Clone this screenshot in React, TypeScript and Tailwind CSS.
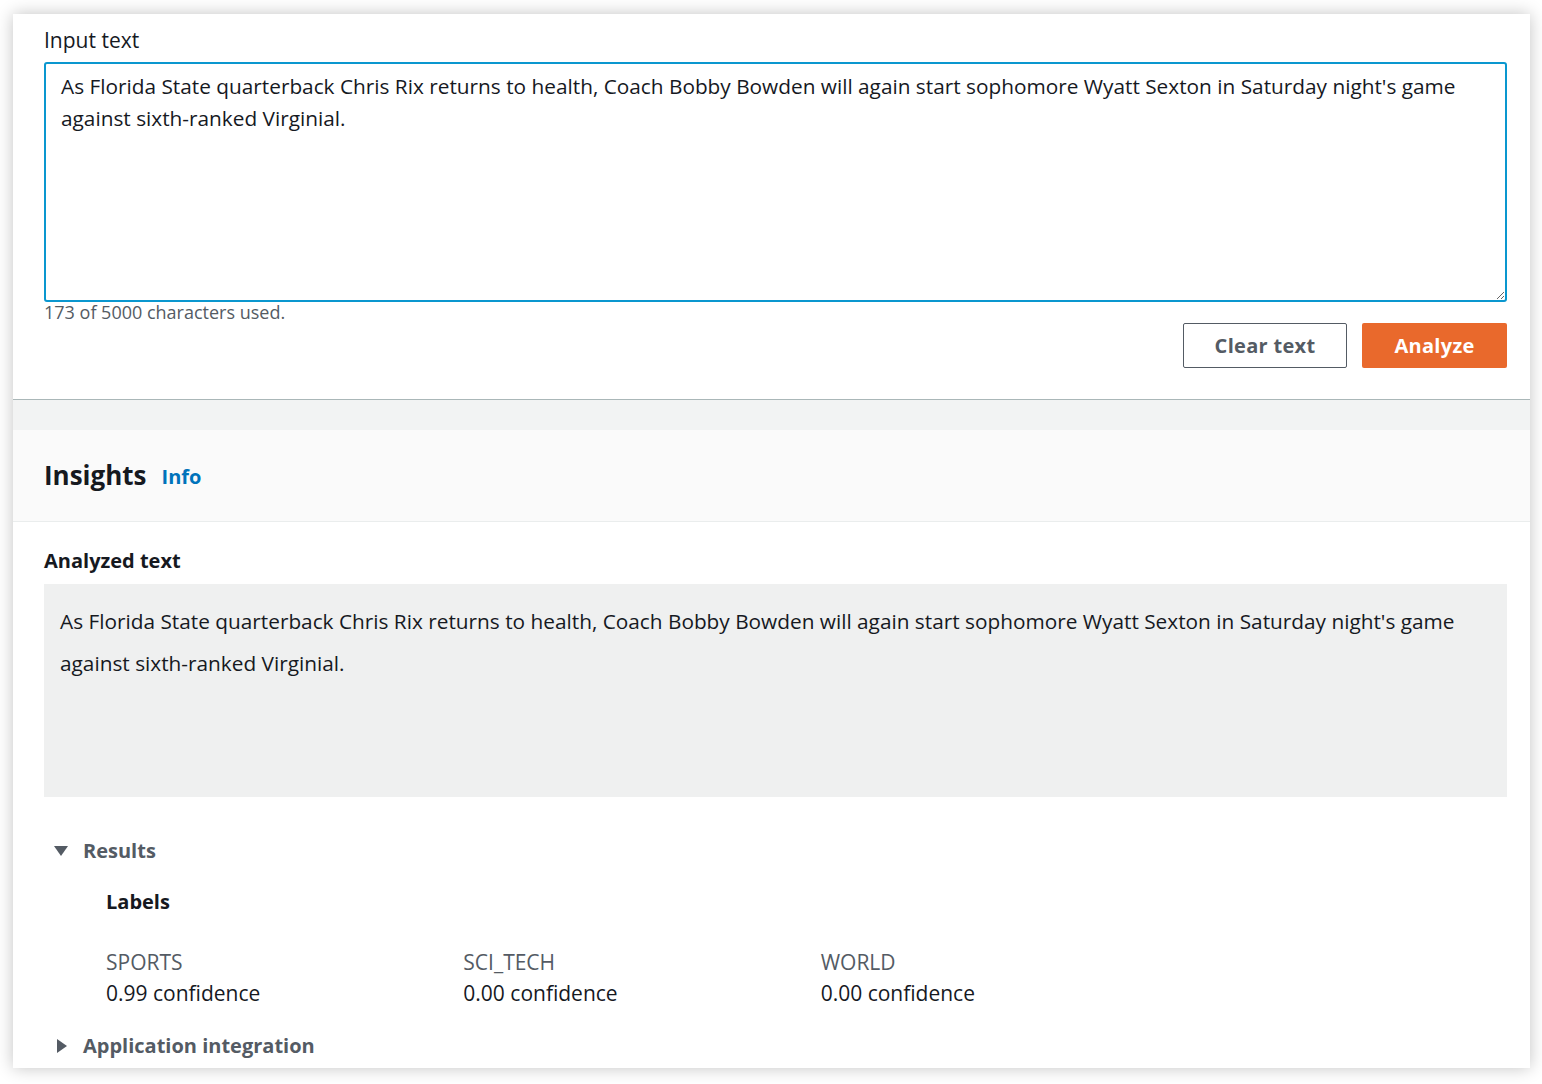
const SAMPLE =
  "As Florida State quarterback Chris Rix returns to health, Coach Bobby Bowden will again start sophomore Wyatt Sexton in Saturday night's game against sixth-ranked Virginial.";

const LABELS = [
  { name: "SPORTS", score: "0.99" },
  { name: "SCI_TECH", score: "0.00" },
  { name: "WORLD", score: "0.00" },
];

function Caret({ open }: { open: boolean }) {
  return (
    <svg width="16" height="16" viewBox="0 0 16 16" className="shrink-0">
      {open ? (
        <path d="M1 3 H15 L8 13 Z" fill="#545b64" />
      ) : (
        <path d="M4 1 V15 L14 8 Z" fill="#545b64" />
      )}
    </svg>
  );
}

function InputPanel() {
  return (
    <section className="border-b border-[#aab7b8] bg-white pb-[31px] pl-[31px] pr-[23px] pt-[12px]">
      <label className="block text-[21px] leading-[28px] text-[#16191f]">Input text</label>
      <textarea
        defaultValue={SAMPLE}
        className="mt-[8px] block h-[240px] w-full rounded-[3px] border-2 border-[#0a97cf] px-[15px] py-[6px] text-[20.8px] leading-[32px] text-[#16191f] outline-none"
      />
      <p className="text-[18px] leading-[20px] text-[#545b64]">173 of 5000 characters used.</p>
      <div className="mt-[1px] flex justify-end gap-[15px]">
        <button className="h-[45px] w-[164px] rounded-[2px] border border-[#545b64] bg-white text-[20px] font-bold tracking-[0.3px] text-[#545b64]">
          Clear text
        </button>
        <button className="h-[45px] w-[145px] rounded-[2px] bg-[#e9692c] text-[20px] font-bold tracking-[0.3px] text-white">
          Analyze
        </button>
      </div>
    </section>
  );
}

function Insights() {
  return (
    <section className="flex-1 bg-white">
      <header className="flex h-[92px] items-center gap-[15px] border-b border-[#eaeded] bg-[#fafafa] pl-[31px]">
        <h2 className="text-[26px] font-bold text-[#16191f]">Insights</h2>
        <a className="mt-[3px] text-[20px] font-bold text-[#0073bb]">Info</a>
      </header>

      <div className="pl-[31px] pr-[23px] pt-[25px]">
        <h3 className="text-[20px] font-bold leading-[28px] text-[#16191f]">Analyzed text</h3>
        <div className="mt-[9px] h-[213px] bg-[#eff0f0] px-[16px] pt-[16px] text-[20.8px] leading-[42px] text-[#16191f]">
          {SAMPLE}
        </div>

        <div className="mt-[40px] flex items-center gap-[14px] pl-[9px]">
          <Caret open />
          <span className="text-[20px] font-bold leading-[28px] text-[#545b64]">Results</span>
        </div>

        <div className="pl-[62px]">
          <h4 className="mt-[23px] text-[20px] font-bold leading-[28px] text-[#16191f]">Labels</h4>
          <div className="mt-[31px] grid w-[1072px] grid-cols-3">
            {LABELS.map((l) => (
              <div key={l.name} className="text-[21px] leading-[31px]">
                <div className="text-[#545b64]">{l.name}</div>
                <div className="text-[#16191f]">{l.score} confidence</div>
              </div>
            ))}
          </div>
        </div>

        <div className="mt-[23px] flex items-center gap-[14px] pl-[9px]">
          <Caret open={false} />
          <span className="text-[20px] font-bold leading-[28px] text-[#545b64]">Application integration</span>
        </div>
      </div>
    </section>
  );
}

export default function App() {
  return (
    <div className="h-[1084px] w-[1542px] overflow-hidden bg-white pl-[13px] pt-[14px] font-['Open_Sans',sans-serif]">
      <div className="flex h-[1054px] w-[1517px] flex-col overflow-hidden bg-[#f2f3f3] shadow-[0_0_16px_rgba(0,0,0,0.24)]">
        <InputPanel />
        <div className="h-[30px] shrink-0" />
        <Insights />
      </div>
    </div>
  );
}
